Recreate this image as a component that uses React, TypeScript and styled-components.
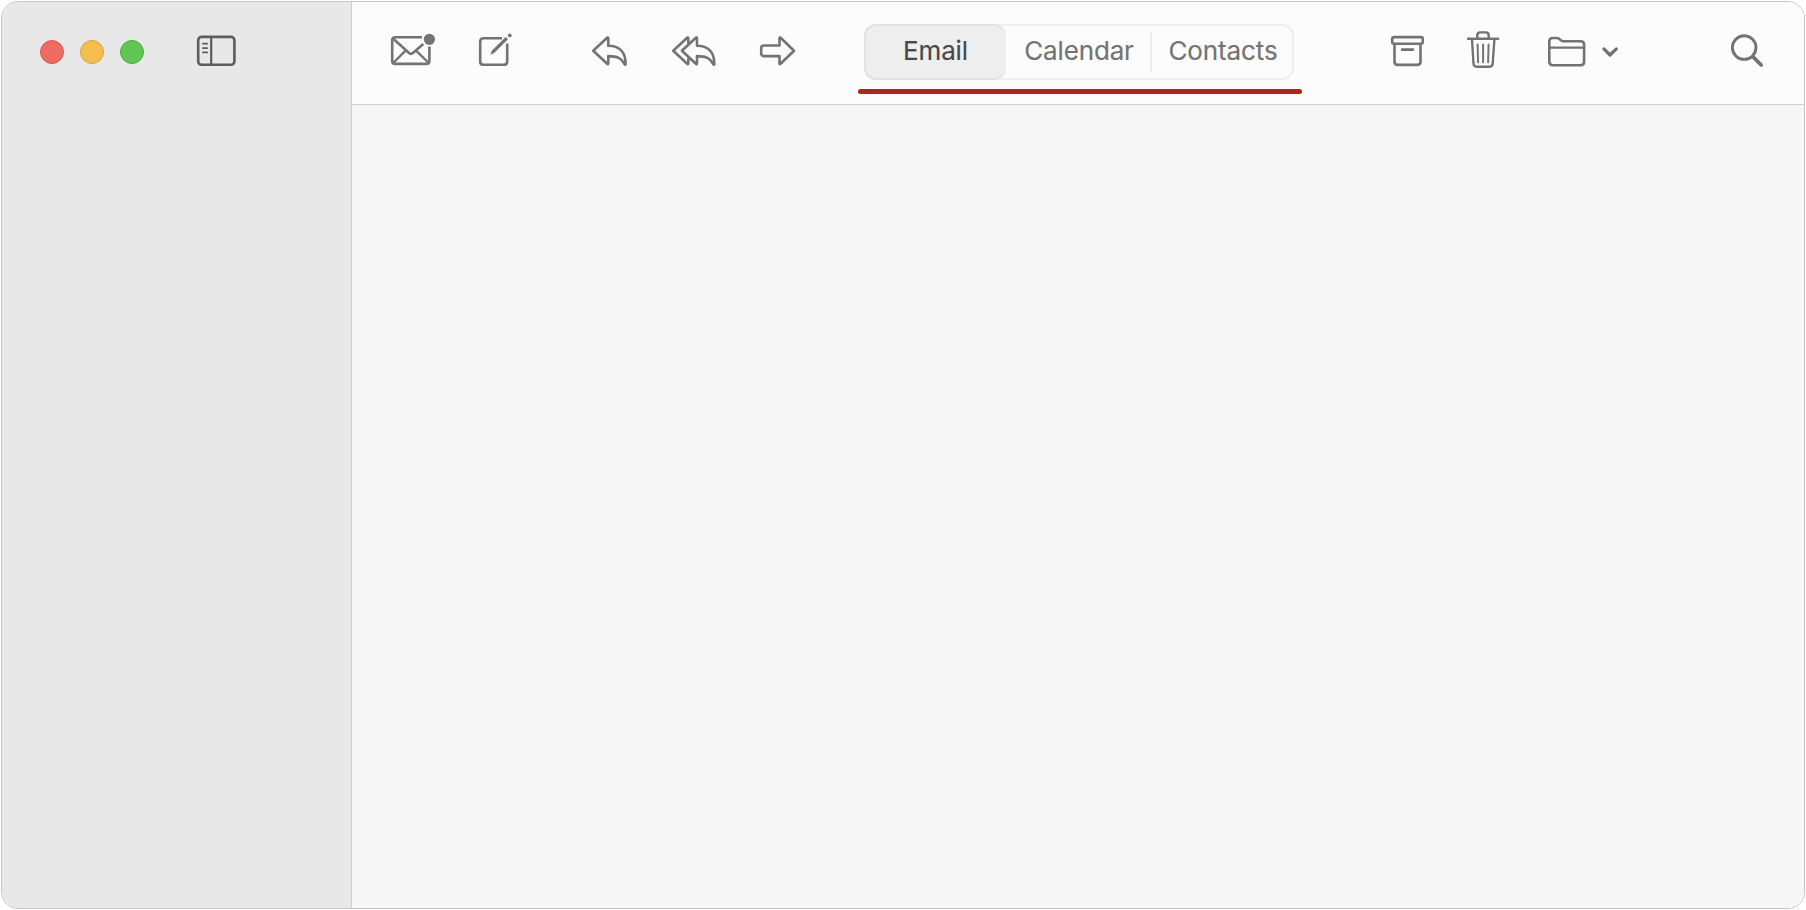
import React from "react";
import styled, { createGlobalStyle } from "styled-components";

const GlobalStyle = createGlobalStyle`
  *, *::before, *::after { box-sizing: border-box; }
  body {
    margin: 0;
    background: #fff;
    font-family: Inter, Roboto, "Liberation Sans", sans-serif;
  }
`;

const Desktop = styled.div`
  width: 1806px;
  height: 910px;
  padding: 1px;
`;

const Window = styled.div`
  display: flex;
  height: 908px;
  border: 1px solid #c6c6c6;
  border-radius: 17px;
  overflow: hidden;
`;

const Sidebar = styled.aside`
  display: flex;
  align-items: flex-start;
  width: 350px;
  padding: 26px 0 0 38px;
  background: #e8e8e8;
  border-right: 1px solid #cfcfcf;
`;

const Lights = styled.div`
  display: flex;
  align-items: center;
  gap: 16px;
  height: 48px;
  margin-right: 50px;
`;

const Light = styled.span<{ $fill: string; $rim: string }>`
  width: 24px;
  height: 24px;
  border-radius: 50%;
  background: ${(p) => p.$fill};
  border: 1px solid ${(p) => p.$rim};
`;

const Main = styled.main`
  display: flex;
  flex: 1;
  flex-direction: column;
  background: #f6f6f6;
`;

const Toolbar = styled.header`
  display: flex;
  align-items: flex-start;
  height: 103px;
  padding: 22px 0 0 36px;
  background: #fcfcfc;
  border-bottom: 1px solid #d0d0d0;
`;

const IconButton = styled.button<{ $gap?: number }>`
  display: flex;
  flex: none;
  margin: 4px ${(p) => p.$gap ?? 0}px 0 0;
  padding: 0;
  border: 0;
  background: none;
  color: #737373;
`;

const SidebarToggle = styled(IconButton)`
  margin: 0 0 0 -0.5px;
  color: #5d5d5d;
`;

const Glyph = styled.svg`
  display: block;
  fill: none;
  stroke: currentColor;
  stroke-linecap: round;
  stroke-linejoin: round;
`;

const Switcher = styled.nav`
  display: flex;
  flex: none;
  flex-direction: column;
  align-items: center;
  width: 444px;
  margin-right: 86px;
`;

const Segments = styled.div`
  display: flex;
  width: 430px;
  height: 56px;
  margin-right: 2px;
  border-radius: 12px;
  box-shadow: inset 0 0 0 2px #efefef;
`;

const Segment = styled.button<{ $width: number; $spacing: number; $indent?: number; $active?: boolean }>`
  width: ${(p) => p.$width}px;
  height: 56px;
  padding: 0 0 2px;
  border: ${(p) => (p.$active ? "2px solid #e3e3e3" : "0")};
  border-right: 0;
  border-radius: 12px;
  background: ${(p) => (p.$active ? "#eeeeee" : "transparent")};
  color: ${(p) => (p.$active ? "#484848" : "#737373")};
  font: 400 26px/48px Inter, Roboto, "Liberation Sans", sans-serif;
  letter-spacing: ${(p) => p.$spacing}px;
  text-indent: ${(p) => p.$indent ?? 0}px;
  -webkit-text-stroke: 0.15px currentColor;
  text-align: center;
  white-space: nowrap;
`;

const Separator = styled.span`
  width: 2px;
  height: 40px;
  margin-top: 8px;
  background: #eeeeee;
`;

const Underline = styled.span`
  width: 444px;
  height: 5px;
  margin-top: 9px;
  border-radius: 3px;
  background: #a82a18;
`;

type IconProps = { width: number; stroke?: number; children: React.ReactNode };

const Icon = ({ width, stroke = 2.6, children }: IconProps) => (
  <Glyph width={width} height={44} viewBox={`0 0 ${width} 44`} strokeWidth={stroke}>
    {children}
  </Glyph>
);

const arrow =
  "M5.2 22.7 L19.2 9.7 Q20.3 8.9 20.3 10.4 V17.7 C32 17.7 37.6 25 37.6 36 Q37.4 37.6 36.5 36 C33.5 30.4 29.5 28.1 20.3 28.1 V35.2 Q20.3 36.6 19.2 35.8 Z";

export default function App() {
  return (
    <>
      <GlobalStyle />
      <Desktop>
        <Window>
          <Sidebar>
            <Lights>
              <Light $fill="#ed6b60" $rim="#d9594e" />
              <Light $fill="#f5bf50" $rim="#d9a23c" />
              <Light $fill="#62c655" $rim="#4fab41" />
            </Lights>
            <SidebarToggle aria-label="Toggle sidebar">
              <Icon width={46}>
                <rect x="4.2" y="8.9" width="36.2" height="27.9" rx="3.4" />
                <path d="M17.2 9V37" strokeWidth="2.2" />
                <path d="M9 15.6h4.2M9 20.1h4.2M9 24.4h4.2" strokeWidth="1.9" />
              </Icon>
            </SidebarToggle>
          </Sidebar>
          <Main>
            <Toolbar>
              <IconButton $gap={38} aria-label="Get mail">
                <Icon width={50}>
                  <path d="M34 9.2H7.4Q4.2 9.2 4.2 12.4V32.7Q4.2 35.9 7.4 35.9H38.2Q41.4 35.9 41.4 32.7V18.4" strokeLinecap="butt" />
                  <path d="M5 10.5 20.8 24.8Q23 26.8 25.2 24.8L35.3 16" strokeLinecap="butt" />
                  <path d="M5.2 35 17.3 22.8M28.3 22.8 40.8 35" strokeWidth="2.4" strokeLinecap="butt" />
                  <circle cx="41.4" cy="11.3" r="5.6" fill="currentColor" stroke="none" />
                </Icon>
              </IconButton>
              <IconButton $gap={72} aria-label="Compose">
                <Icon width={40}>
                  <path d="M26 10.2H7.6Q4.2 10.2 4.2 13.6V33.4Q4.2 36.8 7.6 36.8H27.8Q31.2 36.8 31.2 33.4V15.6" strokeLinecap="butt" />
                  <path d="M29.6 9 16 22.6 14.3 26.8 18.2 25 32 11.3Z" fill="currentColor" stroke="none" />
                  <circle cx="33.8" cy="7.4" r="1.9" fill="currentColor" stroke="none" />
                </Icon>
              </IconButton>
              <IconButton $gap={36} aria-label="Reply">
                <Icon width={44}>
                  <path d={arrow} />
                </Icon>
              </IconButton>
              <IconButton $gap={36} aria-label="Reply all">
                <Icon width={52}>
                  <path d="M20.3 14.8V10.4Q20.3 8.9 19.2 9.7L5.2 22.7 19.2 35.8Q20.3 36.6 20.3 35.2V31" />
                  <path d={arrow} transform="translate(8.7 0)" />
                </Icon>
              </IconButton>
              <IconButton $gap={58} aria-label="Forward">
                <Icon width={44}>
                  <path d="M23.5 17.5V10.4Q23.5 8.9 24.6 9.7L38 22.7 24.6 35.8Q23.5 36.6 23.5 35.2V28.1H7.8Q5.2 28.1 5.2 25.5V20.1Q5.2 17.5 7.8 17.5Z" />
                </Icon>
              </IconButton>
              <Switcher>
                <Segments>
                  <Segment $width={142} $spacing={-0.15} $indent={-1} $active>Email</Segment>
                  <Segment $width={144} $spacing={-0.15} $indent={2}>Calendar</Segment>
                  <Separator />
                  <Segment $width={142} $spacing={-0.1}>Contacts</Segment>
                </Segments>
                <Underline />
              </Switcher>
              <IconButton $gap={36} aria-label="Archive">
                <Icon width={40}>
                  <rect x="4.2" y="9.1" width="30.6" height="6.6" rx="2" />
                  <path d="M6.5 16V33.4Q6.5 36.9 10 36.9H29Q32.5 36.9 32.5 33.4V16M14 21.6H25.1" />
                </Icon>
              </IconButton>
              <IconButton $gap={40} aria-label="Delete">
                <Icon width={40} stroke={2.4}>
                  <path d="M4 10.8H34.2M13.3 10V7.4Q13.3 4.4 16.3 4.4H21.7Q24.7 4.4 24.7 7.4V10M8 11.5 9.5 35.7Q9.7 38.7 12.7 38.7H25.5Q28.5 38.7 28.7 35.7L30.4 11.5" />
                  <path d="M13.6 16.5 14.1 34.2M19.1 16.5V34.2M24.6 16.5 24.1 34.2" strokeWidth="2" />
                </Icon>
              </IconButton>
              <IconButton $gap={10} aria-label="Move to folder">
                <Icon width={46}>
                  <path d="M5.3 13.4Q5.3 10 8.8 10H12.5Q14.2 10 15.5 11.1L16.8 12.3Q18 13.3 19.7 13.3H36.6Q40.1 13.3 40.1 16.6V33.8Q40.1 37.2 36.6 37.2H8.8Q5.3 37.2 5.3 33.8Z" />
                  <path d="M5.3 19.6H40.1" strokeWidth="2.2" />
                </Icon>
              </IconButton>
              <IconButton $gap={106} aria-label="Folder options">
                <Icon width={20} stroke={3.3}>
                  <path d="M3.9 20.9 10 27 16.3 20.9" />
                </Icon>
              </IconButton>
              <IconButton aria-label="Search">
                <Icon width={44} stroke={2.9}>
                  <circle cx="18.2" cy="19.6" r="11.8" />
                  <path d="M26.8 28.6 35.2 37" strokeWidth="3.7" />
                </Icon>
              </IconButton>
            </Toolbar>
          </Main>
        </Window>
      </Desktop>
    </>
  );
}
